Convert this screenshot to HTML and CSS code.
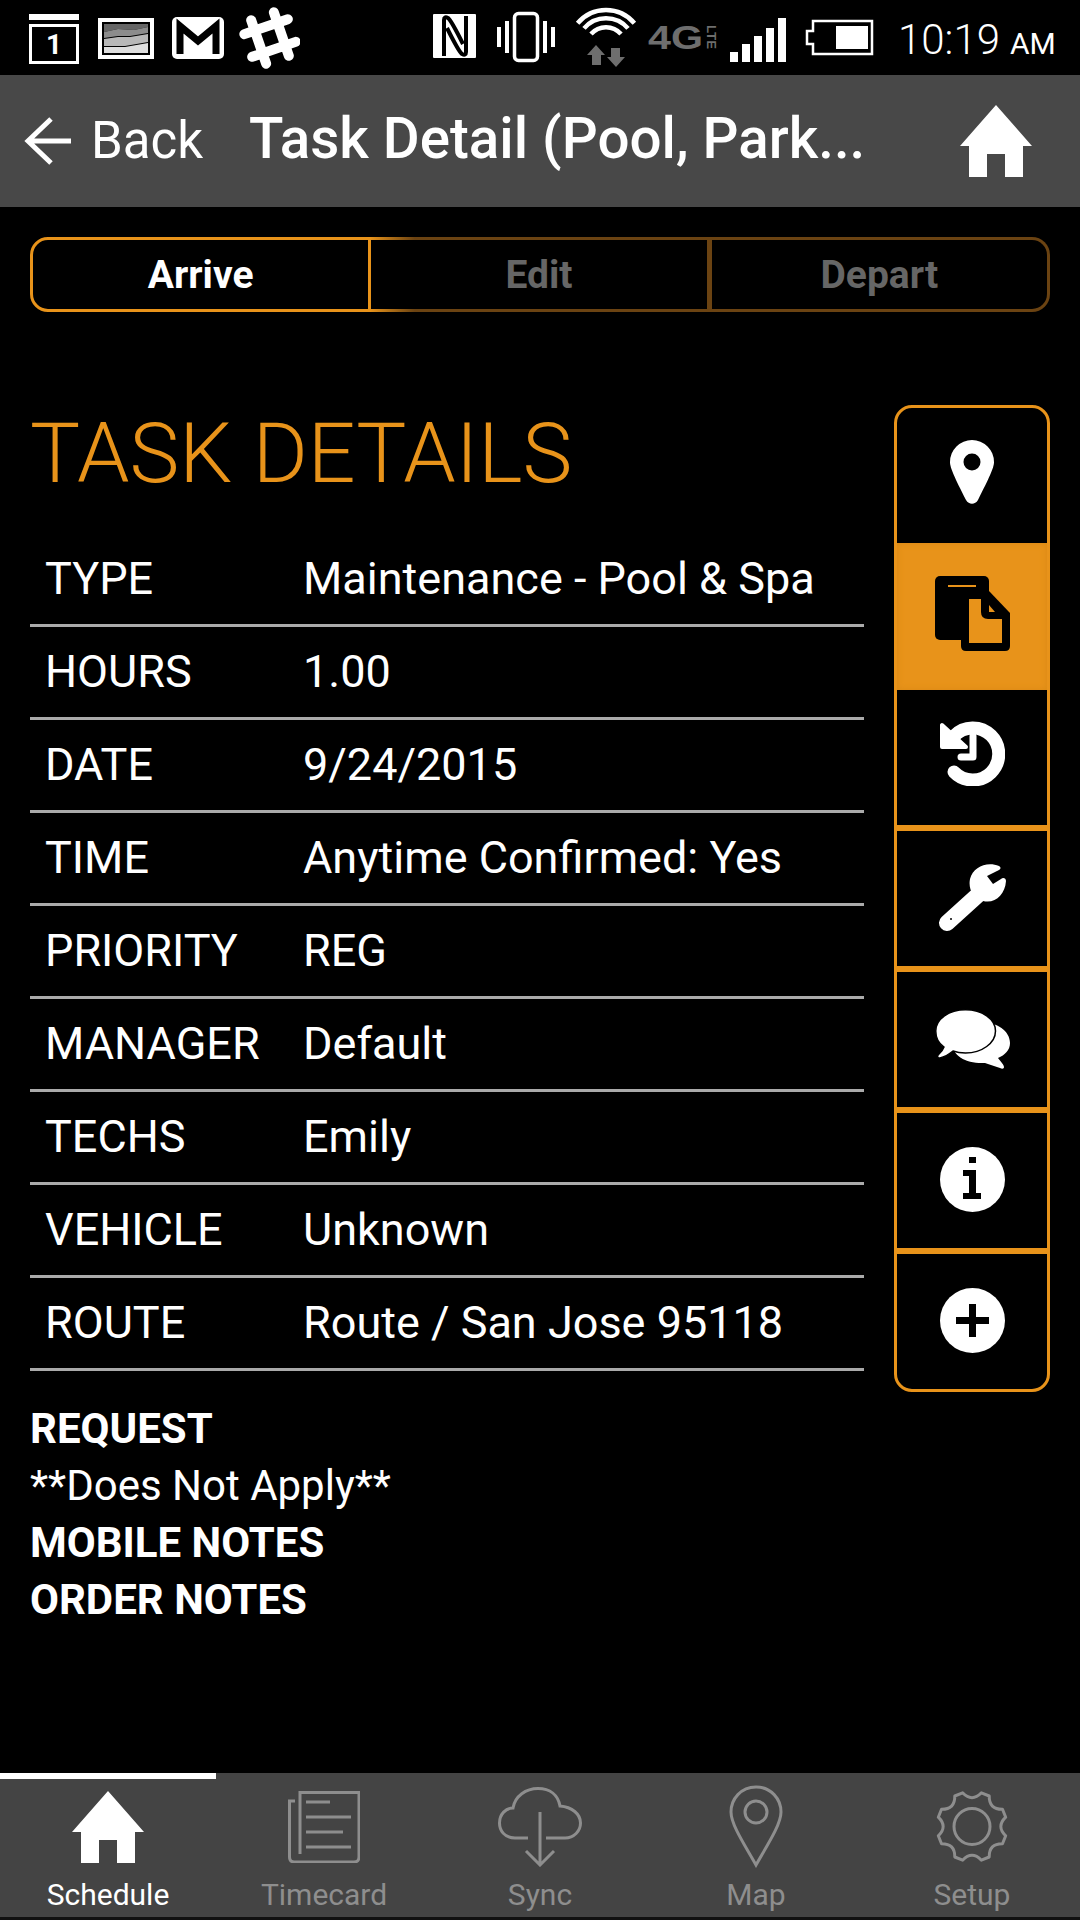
FILE: index.html
```html
<!DOCTYPE html>
<html lang="en">
<head>
    <meta charset="UTF-8">
    <meta name="viewport" content="width=device-width, initial-scale=1.0">
    <title>Task Detail</title>
    <link rel="stylesheet" href="styles.css">
</head>
<body>
    <div class="status-bar">
        <svg class="status-left" viewBox="20 0 280 75" width="280" height="75">
            <!-- calendar -->
            <rect x="29" y="14" width="50" height="6" fill="#fff"/>
            <rect x="30.5" y="25.5" width="47" height="37" fill="none" stroke="#fff" stroke-width="3"/>
            <text class="cal-day" x="54" y="54" text-anchor="middle">1</text>
            <!-- picture -->
            <rect x="98" y="18" width="56" height="41" fill="#fff"/>
            <rect x="102" y="22" width="48" height="33" fill="#000"/>
            <path d="M104 24H148V27L134 30 118 29 104 32Z" fill="#666"/>
            <path d="M104 32 118 29 134 30 148 27V33L130 36 118 36 104 38Z" fill="#8c8c8c"/>
            <path d="M104 39 118 37 130 37 148 34V42L125 46 104 46Z" fill="#b8b8b8"/>
            <path d="M104 47 125 47 148 43V53H104Z" fill="#dedede"/>
            <!-- gmail -->
            <rect x="172" y="17" width="52" height="42" rx="5" fill="#fff"/>
            <path d="M180 54V26L198 41 216 26V54" fill="none" stroke="#000" stroke-width="7"/>
            <!-- slack -->
            <g stroke="#fff" stroke-width="10" stroke-linecap="round" transform="rotate(-19 270 38)">
                <path d="M258 15V61M282 15V61M247 26H293M247 50H293"/>
            </g>
        </svg>
        <svg class="status-right" viewBox="410 0 470 75" width="470" height="75">
            <!-- nfc -->
            <rect x="433" y="14" width="43" height="44" rx="1" fill="#fff"/>
            <path d="M444 56V20Q444 16 448 18Q451 20 463 44M466 16V52Q466 56 462 54Q459 52 447 28" fill="none" stroke="#000" stroke-width="4"/>
            <!-- vibrate -->
            <path d="M497 27h4v20h-4zM505 21h4v32h-4zM543 21h4v32h-4zM551 27h4v20h-4z" fill="#fff"/>
            <rect x="514.5" y="13.5" width="23" height="47" rx="4" fill="none" stroke="#fff" stroke-width="3.5"/>
            <!-- wifi -->
            <g fill="none" stroke="#fff" stroke-width="4.5">
                <path d="M577.6 23.2A37 37 0 0 1 634.4 23.2"/>
                <path d="M584 28.4A29 29 0 0 1 628 28.4"/>
                <path d="M591 34A20 20 0 0 1 621 34"/>
            </g>
            <path d="M596 45 605 55H601V65H592V55H587ZM611 48H620V57H625L616 67 607 57H611Z" fill="#6e6e6e"/>
            <!-- network -->
            <text class="net-type" x="648" y="49" textLength="55" lengthAdjust="spacingAndGlyphs">4G</text>
            <text class="net-sub" transform="translate(707 25) rotate(90)" textLength="24" lengthAdjust="spacingAndGlyphs">LTE</text>
            <!-- signal -->
            <path d="M730 52h8v10h-8zM742 44h8v18h-8zM754 36h8v26h-8zM766 28h8v34h-8zM778 18h8v44h-8z" fill="#fff"/>
            <!-- battery -->
            <path d="M813 21H872V54H813V44H807V31H813Z" fill="none" stroke="#fff" stroke-width="2.5"/>
            <rect x="836" y="26" width="32" height="23" fill="#fff"/>
        </svg>
        <div class="clock">10:19<span class="clock-ampm">AM</span></div>
    </div>

    <header class="app-header">
        <svg class="back-arrow" viewBox="0 0 48 48" width="48" height="48">
            <path d="M47 24H4M27 2 4 24 27 46" fill="none" stroke="#fff" stroke-width="5"/>
        </svg>
        <span class="back-label">Back</span>
        <h1 class="page-title">Task Detail (Pool, Park...</h1>
        <svg class="home-icon" viewBox="0 0 72 72" width="72" height="72">
            <path d="M36 0 72 41H63V72H45V49H27V72H9V41H0Z" fill="#fff"/>
        </svg>
    </header>

    <nav class="segments">
        <div class="segment segment-active">Arrive</div>
        <div class="segment">Edit</div>
        <div class="segment">Depart</div>
    </nav>

    <main class="content">
        <section class="details">
            <h2 class="details-title">TASK DETAILS</h2>
            <div class="detail-row"><span class="detail-label">TYPE</span><span>Maintenance - Pool &amp; Spa</span></div>
            <div class="detail-row"><span class="detail-label">HOURS</span><span>1.00</span></div>
            <div class="detail-row"><span class="detail-label">DATE</span><span>9/24/2015</span></div>
            <div class="detail-row"><span class="detail-label">TIME</span><span>Anytime Confirmed: Yes</span></div>
            <div class="detail-row"><span class="detail-label">PRIORITY</span><span>REG</span></div>
            <div class="detail-row"><span class="detail-label">MANAGER</span><span>Default</span></div>
            <div class="detail-row"><span class="detail-label">TECHS</span><span>Emily</span></div>
            <div class="detail-row"><span class="detail-label">VEHICLE</span><span>Unknown</span></div>
            <div class="detail-row"><span class="detail-label">ROUTE</span><span>Route / San Jose 95118</span></div>
            <div class="notes">
                <strong>REQUEST</strong>
                <div>**Does Not Apply**</div>
                <strong>MOBILE NOTES</strong>
                <strong>ORDER NOTES</strong>
            </div>
        </section>

        <aside class="side-menu">
            <div class="side-item side-first">
                <svg viewBox="0 0 44 64" width="44" height="64">
                    <path fill-rule="evenodd" d="M22 0A22 22 0 0 1 44 22C44 28 39 38 28 60 25 65 19 65 16 60 5 38 0 28 0 22A22 22 0 0 1 22 0ZM22 13.5A8.5 8.5 0 1 0 22 30.5 8.5 8.5 0 1 0 22 13.5Z" fill="#fff"/>
                </svg>
            </div>
            <div class="side-item side-active">
                <svg viewBox="0 0 75 75" width="75" height="75">
                    <rect width="54" height="64" rx="5" fill="#000"/>
                    <path d="M26 55V70Q26 75 31 75H70Q75 75 75 70V37L54 15H26Z" fill="#000"/>
                    <path d="M13 9h28v2H13z" fill="#e8931a"/>
                    <path d="M34 23H46V36Q46 43 53 43H67V67H34Z" fill="#e8931a"/>
                    <path d="M54 29 60 36H54Z" fill="#e8931a"/>
                </svg>
            </div>
            <div class="side-item side-plain">
                <svg viewBox="0 0 65 65" width="65" height="65">
                    <path d="M14 51A26 26 0 1 0 14 15" fill="none" stroke="#fff" stroke-width="13" stroke-linecap="round"/>
                    <path d="M2 4V26H26Z" fill="#fff" stroke="#fff" stroke-width="4" stroke-linejoin="round"/>
                    <path d="M33 15V36H21" fill="none" stroke="#fff" stroke-width="7" stroke-linejoin="round" stroke-linecap="round"/>
                </svg>
            </div>
            <div class="side-item">
                <svg viewBox="0 0 70 70" width="70" height="70">
                    <path d="M10 60 42 31" stroke="#fff" stroke-width="16" stroke-linecap="round"/>
                    <path d="M62 3C50-2 36 4 33 16 31 26 36 36 46 38 58 41 68 32 69 18 69 15 66 14 64 16L56 21 50 13 62 7C64 6 64 4 62 3Z" fill="#fff"/>
                    <circle cx="14" cy="56" r="1" fill="#000"/>
                </svg>
            </div>
            <div class="side-item">
                <svg viewBox="0 0 75 60" width="75" height="60">
                    <path d="M46 13C62 13 75 22 75 34 75 41 70 46 63 49 66 53 69 56 69 58 69 60 67 60 65 59L50 54C32 55 17 47 17 34 17 22 30 13 46 13Z" fill="#fff"/>
                    <path d="M30.500 .75C47 .75 60.500 10 60.500 22 60.500 34 47 44 30.500 44 26 44 22 43.500 18 42 13 46 9 48 5 49 2 49 2 47 4 45 6 43 8 41 9 38 3 34 .75 28 .75 22 .75 10 14 .75 30.500 .75Z" fill="#fff" stroke="#000" stroke-width="1.500"/>
                </svg>
            </div>
            <div class="side-item">
                <svg viewBox="0 0 65 65" width="65" height="65">
                    <circle cx="32.500" cy="32.500" r="32.500" fill="#fff"/>
                    <path d="M29 10h7v6h-7zM23 23h13v6H23zM29 23h7v29h-7zM23 46h18v6H23z" fill="#000"/>
                </svg>
            </div>
            <div class="side-item">
                <svg viewBox="0 0 65 65" width="65" height="65">
                    <circle cx="32.500" cy="32.500" r="32.500" fill="#fff"/>
                    <path d="M29 16h7v13h13v7H36v13h-7V36H16v-7h13z" fill="#000"/>
                </svg>
            </div>
        </aside>
    </main>

    <footer class="tab-bar">
        <div class="tab tab-active">
            <div class="tab-icon">
                <svg viewBox="0 0 72 72" width="72" height="72">
                    <path d="M36 0 72 41H63V72H45V49H27V72H9V41H0Z" fill="#fff"/>
                </svg>
            </div>
            <span class="tab-label">Schedule</span>
        </div>
        <div class="tab">
            <div class="tab-icon">
                <svg viewBox="0 0 72 72" width="72" height="72">
                    <g fill="none" stroke="#8e8e8e" stroke-width="3">
                        <path d="M7 10H1.500V66Q1.500 71 6.500 71H66Q71 71 71 66V1.500H12V63"/>
                        <path d="M18 11H42M18 26H63M18 41H55M18 56H63"/>
                    </g>
                </svg>
            </div>
            <span class="tab-label">Timecard</span>
        </div>
        <div class="tab">
            <div class="tab-icon">
                <svg viewBox="0 0 84 80" width="84" height="80">
                    <g fill="none" stroke="#8e8e8e" stroke-width="3">
                        <path d="M30 51H17C6 51 1.500 43 1.500 36 1.500 27 8 21 15 21 17 9 28 1.500 40 1.500 52 1.500 60 8 62 19 74 20 82.500 27 82.500 36 82.500 44 76 51 67 51H48"/>
                        <path d="M42 25V78M28 64 42 78 56 64"/>
                    </g>
                </svg>
            </div>
            <span class="tab-label">Sync</span>
        </div>
        <div class="tab">
            <div class="tab-icon">
                <svg viewBox="0 0 54 83" width="54" height="83">
                    <g fill="none" stroke="#8e8e8e" stroke-width="3">
                        <path d="M27 2C12 2 2 14 2 27 2 40 17 62 27 80 37 62 52 40 52 27 52 14 42 2 27 2Z"/>
                        <circle cx="27" cy="27" r="11"/>
                    </g>
                </svg>
            </div>
            <span class="tab-label">Map</span>
        </div>
        <div class="tab">
            <div class="tab-icon">
                <svg viewBox="0 0 72 73" width="72" height="73">
                    <g fill="none" stroke="#8e8e8e" stroke-width="3" stroke-linejoin="round">
                        <path d="M45.400 2.800 53.200 6Q53 19.500 66.500 19.300L69.700 27.200Q60 36.500 69.700 45.800L66.500 53.700Q53 53.500 53.200 67L45.400 70.200Q36 60.500 26.600 70.200L18.800 67Q19 53.500 5.500 53.700L2.300 45.800Q12 36.500 2.300 27.200L5.500 19.300Q19 19.500 18.800 6L26.600 2.800Q36 12.500 45.400 2.800Z"/>
                        <circle cx="36" cy="36.500" r="18"/>
                    </g>
                </svg>
            </div>
            <span class="tab-label">Setup</span>
        </div>
    </footer>
</body>
</html>
```

FILE: styles.css
```css
* {
    box-sizing: border-box;
}

body {
    margin: 0;
    width: 1080px;
    height: 1920px;
    background-color: black;
    color: white;
    font-family: Roboto, "Liberation Sans", sans-serif;
    display: flex;
    flex-direction: column;
}

svg {
    display: block;
    flex-shrink: 0;
}

.status-bar {
    height: 75px;
    display: flex;
    align-items: center;
    padding-left: 20px;
}

.status-right {
    margin-left: 110px;
}

.cal-day {
    font-family: Roboto, sans-serif;
    font-size: 28px;
    font-weight: 700;
    fill: white;
}

.net-type {
    font-family: "Liberation Sans", sans-serif;
    font-size: 33px;
    font-weight: 700;
    fill: #6e6e6e;
}

.net-sub {
    font-family: "Liberation Sans", sans-serif;
    font-size: 12px;
    font-weight: 700;
    fill: #6e6e6e;
}

.clock {
    margin-left: 18px;
    padding-top: 4px;
    font-size: 42px;
    font-weight: 300;
    white-space: nowrap;
}

.clock-ampm {
    font-size: 30px;
    font-weight: 400;
    margin-left: 10px;
}

.app-header {
    height: 132px;
    background-color: #484848;
    display: flex;
    align-items: center;
    padding-left: 24px;
}

.back-label {
    margin-left: 19px;
    padding-bottom: 2px;
    font-size: 51px;
}

.page-title {
    margin: 0 0 0 46px;
    padding-bottom: 4px;
    font-size: 56.5px;
    font-weight: 500;
    white-space: nowrap;
}

.home-icon {
    margin-left: auto;
    margin-right: 48px;
}

.segments {
    margin: 30px 30px 0;
    height: 75px;
    display: flex;
}

.segment {
    flex: 1;
    display: flex;
    align-items: center;
    justify-content: center;
    font-size: 39px;
    font-weight: 700;
    color: #666;
    border: 3px solid #6b4312;
    border-left: none;
}

.segment:last-child {
    border-radius: 0 18px 18px 0;
}

.segment:nth-child(2) {
    border-right-width: 5px;
    border-image: linear-gradient(to right, #e8931a, #6b4312 45px) 1;
}

.segment-active {
    color: white;
    border: 3px solid #e8931a;
    border-radius: 18px 0 0 18px;
}

.content {
    flex: 1;
    display: flex;
    justify-content: space-between;
    padding: 93px 30px 0;
}

.details {
    width: 834px;
}

.details-title {
    margin: 0;
    height: 129px;
    font-size: 84px;
    font-weight: 300;
    line-height: 98px;
    color: #e8931a;
}

.detail-row {
    height: 93px;
    display: flex;
    align-items: center;
    padding: 0 0 2px 15px;
    font-size: 45px;
    border-bottom: 3px solid #aaa;
}

.detail-label {
    width: 258px;
}

.notes {
    margin-top: 29px;
    display: flex;
    flex-direction: column;
    font-size: 42px;
    line-height: 57px;
}

.side-menu {
    width: 156px;
    height: 987px;
    display: flex;
    flex-direction: column;
    border: 3px solid #e8931a;
    border-radius: 18px;
    overflow: hidden;
}

.side-item {
    flex: 0 0 141px;
    display: flex;
    align-items: center;
    justify-content: center;
    padding-bottom: 2px;
    border-top: 6px solid #e8931a;
}

.side-first {
    flex-basis: 135px;
    border-top: none;
    padding-bottom: 8px;
}

.side-active {
    flex-basis: 147px;
    border-top: none;
    padding-bottom: 6px;
    background-color: #e8931a;
    box-shadow: inset 0 0 6px #d98814;
}

.side-plain {
    flex-basis: 135px;
    border-top: none;
    padding-bottom: 9px;
}

.tab-bar {
    height: 147px;
    background-color: #444;
    border-bottom: 3px solid #111;
    display: flex;
}

.tab {
    width: 216px;
    display: flex;
    flex-direction: column;
    align-items: center;
    border-top: 6px solid transparent;
    padding-top: 6px;
    font-size: 30px;
    color: #8e8e8e;
}

.tab-active {
    border-top-color: white;
    color: white;
}

.tab-icon {
    height: 83px;
    display: flex;
    align-items: center;
    justify-content: center;
}

.tab-label {
    margin-top: 9px;
    line-height: 36px;
}
```
